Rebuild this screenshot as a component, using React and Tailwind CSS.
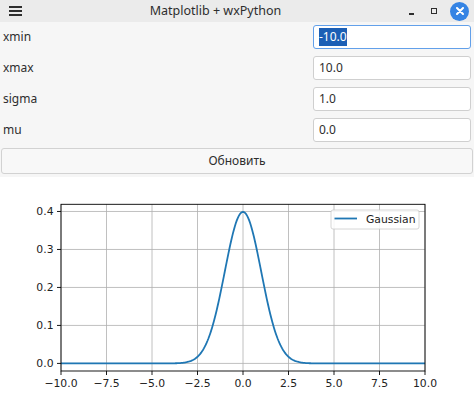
import React from 'react';

const fields = [
  { label: 'xmin', value: '-10.0', focused: true },
  { label: 'xmax', value: '10.0' },
  { label: 'sigma', value: '1.0' },
  { label: 'mu', value: '0.0' },
];

// plot box in page coordinates
const X0 = 61;
const X1 = 425;
const Y0 = 203.3;
const Y1 = 370;
const xmin = -10;
const xmax = 10;
const ymin = -0.01995;
const ymax = 0.41889;

const sx = (x) => X0 + ((x - xmin) / (xmax - xmin)) * (X1 - X0);
const sy = (y) => Y1 - ((y - ymin) / (ymax - ymin)) * (Y1 - Y0);

function gaussianPath() {
  const pts = [];
  for (let i = 0; i <= 400; i++) {
    const x = xmin + (i / 400) * (xmax - xmin);
    const y = Math.exp(-(x * x) / 2) / Math.sqrt(2 * Math.PI);
    pts.push(`${i === 0 ? 'M' : 'L'}${sx(x).toFixed(2)},${sy(y).toFixed(2)}`);
  }
  return pts.join(' ');
}

function TitleBar() {
  return (
    <div className="flex h-[22px] items-center bg-[#ebebeb] px-[9px]">
      <svg width="13" height="10" viewBox="0 0 13 10">
        <rect x="0" y="0" width="13" height="2" fill="#2e2e2e" />
        <rect x="0" y="4" width="13" height="2" fill="#2e2e2e" />
        <rect x="0" y="8" width="13" height="2" fill="#2e2e2e" />
      </svg>
      <div className="flex-1 text-center text-[12.5px] text-[#2e2e2e]">Matplotlib + wxPython</div>
      <div className="flex items-center">
        <div className="mt-[6px] h-[2px] w-[5px] bg-[#2e2e2e]" />
        <div className="ml-[17px] h-[6px] w-[6px] border-[1.5px] border-[#2e2e2e]" />
        <div className="ml-[13px] -mr-[4px] flex h-[19px] w-[19px] items-center justify-center rounded-full bg-[#3584e4]">
          <svg width="8" height="8" viewBox="0 0 8 8">
            <path d="M1 1L7 7M7 1L1 7" stroke="#fff" strokeWidth="2" strokeLinecap="round" />
          </svg>
        </div>
      </div>
    </div>
  );
}

function Form() {
  return (
    <div className="flex flex-col bg-[#f6f6f6] px-[1px] pt-[3px] pb-[3px]">
      <div className="flex flex-col gap-[7px] pr-[2px]">
        {fields.map((f) => (
          <div key={f.label} className="flex h-[24px] items-center">
            <span className="flex-1 pl-[2px] text-[12px] text-[#2e2e2e]">{f.label}</span>
            <div
              className={`flex h-[24px] w-[158px] items-center rounded-[3px] border bg-white px-[5px] text-[12px] text-[#2e2e2e] ${
                f.focused ? 'border-[#62a0ea]' : 'border-[#cfcfcf]'
              }`}
            >
              {f.focused ? <span className="bg-[#1c5fb5] text-white">{f.value}</span> : f.value}
            </div>
          </div>
        ))}
      </div>
      <div className="mt-[6px] flex h-[26px] items-center justify-center rounded-[3px] border border-[#d2d2d2] bg-[#f8f8f8] text-[12px] text-[#2e2e2e]">
        Обновить
      </div>
    </div>
  );
}

function Plot() {
  const xticks = [-10, -7.5, -5, -2.5, 0, 2.5, 5, 7.5, 10];
  const yticks = [0, 0.1, 0.2, 0.3, 0.4];
  const fmt = (v) => (v < 0 ? '\u2212' + Math.abs(v).toFixed(1) : v.toFixed(1));
  return (
    <svg width="474" height="219" viewBox="0 176 474 219" className="block bg-white">
      {xticks.map((t) => (
        <line key={'gx' + t} x1={sx(t)} x2={sx(t)} y1={Y0} y2={Y1} stroke="#b0b0b0" strokeWidth="0.8" />
      ))}
      {yticks.map((t) => (
        <line key={'gy' + t} x1={X0} x2={X1} y1={sy(t)} y2={sy(t)} stroke="#b0b0b0" strokeWidth="0.8" />
      ))}
      <path d={gaussianPath()} fill="none" stroke="#1f77b4" strokeWidth="1.8" />
      <rect x={X0} y={Y0} width={X1 - X0} height={Y1 - Y0} fill="none" stroke="#000" strokeWidth="0.9" />
      {xticks.map((t) => (
        <g key={'tx' + t}>
          <line x1={sx(t)} x2={sx(t)} y1={Y1} y2={Y1 + 4} stroke="#000" strokeWidth="0.9" />
          <text x={sx(t)} y={386} textAnchor="middle" fontFamily="DejaVu Sans, sans-serif" fontSize="10.8" fill="#222">
            {fmt(t)}
          </text>
        </g>
      ))}
      {yticks.map((t) => (
        <g key={'ty' + t}>
          <line x1={X0 - 4} x2={X0} y1={sy(t)} y2={sy(t)} stroke="#000" strokeWidth="0.9" />
          <text x={53.5} y={sy(t) + 3.9} textAnchor="end" fontFamily="DejaVu Sans, sans-serif" fontSize="10.8" fill="#222">
            {t.toFixed(1)}
          </text>
        </g>
      ))}
      <rect x="331" y="209" width="88" height="19" rx="2" fill="#fff" fillOpacity="0.85" stroke="#cccccc" strokeWidth="0.8" />
      <line x1="334.5" x2="357" y1="217.5" y2="217.5" stroke="#1f77b4" strokeWidth="1.8" />
      <text x="366" y="221.5" fontFamily="DejaVu Sans, sans-serif" fontSize="10.8" fill="#222">
        Gaussian
      </text>
    </svg>
  );
}

export default function App() {
  return (
    <div className="h-[395px] w-[474px] overflow-hidden bg-white font-['Noto_Sans',sans-serif]">
      <TitleBar />
      <Form />
      <Plot />
    </div>
  );
}
